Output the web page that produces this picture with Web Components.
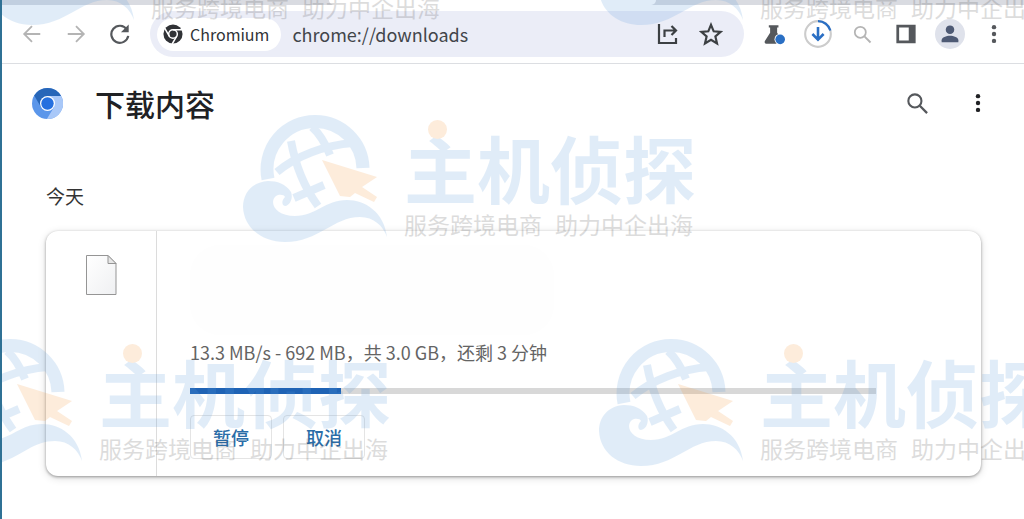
<!DOCTYPE html>
<html lang="zh-CN">
<head>
<meta charset="utf-8">
<title>下载内容</title>
<style>
    html, body { margin: 0; min-height: 100%; }
    body {
        background: #fff;
        color: #202124;
        font-family: "Noto Sans CJK SC", sans-serif;
    }
</style>
</head>
<body>
<downloads-window></downloads-window>

<script>
// 图标统一放在这里，按名称取用
const ICONS = {
    back: '<path d="M21 12H4M12 3.500 3.500 12l8.500 8.500" fill="none" stroke="currentColor" stroke-width="2"/>',
    forward: '<path d="M3 12h17M12 3.500 20.500 12 12 20.500" fill="none" stroke="currentColor" stroke-width="2"/>',
    reload: '<path d="M19.500 7A9.300 9.300 0 1 0 21 14" fill="none" stroke="currentColor" stroke-width="2.400"/><path d="M21.500 1.500V10H13z" fill="currentColor"/>',
    share: '<path d="M4 2v19h17v-5M9.500 15V8.500h11M16.500 4l4.500 4.500-4.500 4.500" fill="none" stroke="currentColor" stroke-width="2.200"/>',
    star: '<path d="M12 2.800l2.700 6.500 7 .6-5.300 4.600 1.600 6.900-6-3.700-6 3.700 1.600-6.900L2.300 9.900l7-.6z" fill="none" stroke="currentColor" stroke-width="2.200"/>',
    flask: '<path d="M5.500 1.500h11v2.400H15v6l6 9.600c.8 1.400 0 3-1.600 3H2.600C1 22.500.2 20.900 1 19.500l6-9.600v-6H5.500z" fill="currentColor"/><circle cx="18.500" cy="17.500" r="6.500" fill="#fff"/><circle cx="18.500" cy="17.500" r="5.500" fill="#2a6fc4"/>',
    download: '<circle cx="12" cy="12" r="11" fill="none" stroke="#ccc" stroke-width="1.800"/><path d="M12 1a11 11 0 0 1 10.600 8" fill="none" stroke="#2a6fc4" stroke-width="1.900"/><path d="M12 6v10.500M7.200 12l4.800 4.800 4.800-4.800" fill="none" stroke="#2a6fc4" stroke-width="2.200"/>',
    search: '<circle cx="9.500" cy="9.500" r="6.300" fill="none" stroke="currentColor" stroke-width="2"/><path d="M14.200 14.200l7 7" stroke="currentColor" stroke-width="2.200"/>',
    panel: '<path d="M1.500 2h21v20h-21zM4.500 5v14h10.500V5z" fill="currentColor" fill-rule="evenodd"/>',
    person: '<circle cx="12" cy="12" r="12" fill="#dfe2eb"/><circle cx="12" cy="8.500" r="3.400" fill="currentColor"/><path d="M5.300 18.600V17c0-2.500 3.800-3.700 6.700-3.700s6.700 1.200 6.700 3.700v1.600z" fill="currentColor"/>',
    dots: '<circle cx="12" cy="4.500" r="2.400" fill="currentColor"/><circle cx="12" cy="12" r="2.400" fill="currentColor"/><circle cx="12" cy="19.500" r="2.400" fill="currentColor"/>',
    chromeMono: '<circle cx="12" cy="12" r="11.500" fill="currentColor"/><g fill="none" stroke="#fff" stroke-width="1.800"><circle cx="12" cy="12" r="5.200"/><path d="M12 6.800h11M7.500 14.600 2 5M16.500 14.600 11 24"/></g>',
    chromium: '<circle cx="12" cy="12" r="12" fill="#5b96ea"/><path d="M12 6.200h10.500A12 12 0 0 1 11.500 24L17 14.900z" fill="#a9c8f8"/><path d="M1.700 5.900A12 12 0 0 1 22.500 6.200H12L7 14.900z" fill="#2766b8"/><circle cx="12" cy="12" r="5.800" fill="#fff"/><circle cx="12" cy="12" r="4.800" fill="#2570df"/>'
};

/**
 * <ui-icon> 图标
 *   data-name - 图标名称
 *   data-size - 边长 (默认 20)
 */
class UiIcon extends HTMLElement {
    constructor() {
        super();
        this.attachShadow({ mode: 'open' });
    }

    connectedCallback() {
        const size = this.dataset.size || 20;
        this.shadowRoot.innerHTML = `
            <style>
                :host { display: inline-flex; flex: none; }
            </style>
            <svg width="${size}" height="${size}" viewBox="0 0 24 24" aria-hidden="true">${ICONS[this.dataset.name]}</svg>
        `;
    }
}

/**
 * <icon-button> 图标按钮
 *   data-icon / data-size / data-label
 */
class IconButton extends HTMLElement {
    constructor() {
        super();
        this.attachShadow({ mode: 'open' });
    }

    connectedCallback() {
        const { icon, size, label } = this.dataset;
        this.shadowRoot.innerHTML = `
            <style>
                :host { display: block; flex: none; width: 44px; color: #55585c; }
                button {
                    display: flex;
                    align-items: center;
                    justify-content: center;
                    width: 100%;
                    height: 44px;
                    padding: 0;
                    border: 0;
                    background: none;
                    color: inherit;
                    cursor: pointer;
                }
            </style>
            <button type="button" aria-label="${label}"><ui-icon data-name="${icon}" data-size="${size || 20}"></ui-icon></button>
        `;
    }
}

// 地址栏
class OmniBox extends HTMLElement {
    constructor() {
        super();
        this.attachShadow({ mode: 'open' });
    }

    connectedCallback() {
        this.shadowRoot.innerHTML = `
            <style>
                :host {
                    display: flex;
                    align-items: center;
                    flex: 1;
                    min-width: 0;
                    height: 46px;
                    padding: 0 11px 0 7px;
                    box-sizing: border-box;
                    border-radius: 23px;
                    background: #ebedf7;
                }
                .chip {
                    display: flex;
                    align-items: center;
                    gap: 7px;
                    height: 33px;
                    padding: 0 12px 0 6px;
                    border: 0;
                    border-radius: 17px;
                    background: #fff;
                    color: #303236;
                    font: 16px "Noto Sans CJK SC", sans-serif;
                }
                input {
                    flex: 1;
                    min-width: 0;
                    margin-left: 11px;
                    padding: 0;
                    border: 0;
                    outline: 0;
                    background: none;
                    color: #42454a;
                    font: 18px "Noto Sans CJK SC", sans-serif;
                }
                icon-button { color: #3c4043; }
            </style>
            <button class="chip" type="button"><ui-icon data-name="chromeMono"></ui-icon>Chromium</button>
            <input type="text" aria-label="地址" value="${this.dataset.url}">
            <slot></slot>
        `;
    }
}

// 浏览器顶部：标签条 + 工具栏
class BrowserBar extends HTMLElement {
    constructor() {
        super();
        this.attachShadow({ mode: 'open' });
    }

    connectedCallback() {
        this.shadowRoot.innerHTML = `
            <style>
                :host { display: block; border-bottom: 1px solid #dcdee2; }
                .strip { display: flex; height: 5px; background: #d9dbe1; }
                .strip .before { flex: 32; }
                .strip .tab { flex: 32; background: #fff; border-radius: 0 0 5px 5px; }
                .strip .after { flex: 36; }
                nav { display: flex; align-items: center; height: 58px; padding: 0 8px; }
                omni-box { margin: 0 8px; }
                .dim { color: #b4b4b4; }
                .dark { color: #3c4043; }
                .person { color: #4e5a74; }
            </style>
            <div class="strip"><div class="before"></div><div class="tab"></div><div class="after"></div></div>
            <nav>
                <icon-button class="dim" data-icon="back" data-label="后退" data-size="22"></icon-button>
                <icon-button class="dim" data-icon="forward" data-label="前进" data-size="22"></icon-button>
                <icon-button data-icon="reload" data-label="重新加载" data-size="22"></icon-button>
                <omni-box data-url="chrome://downloads">
                    <icon-button class="dark" data-icon="share" data-label="分享" data-size="24"></icon-button>
                    <icon-button class="dark" data-icon="star" data-label="收藏" data-size="24"></icon-button>
                </omni-box>
                <icon-button data-icon="flask" data-label="实验" data-size="21"></icon-button>
                <icon-button data-icon="download" data-label="下载" data-size="28"></icon-button>
                <icon-button class="dim" data-icon="search" data-label="搜索" data-size="21"></icon-button>
                <icon-button data-icon="panel" data-label="侧边栏" data-size="22"></icon-button>
                <icon-button class="person" data-icon="person" data-label="个人资料" data-size="30"></icon-button>
                <icon-button data-icon="dots" data-label="菜单" data-size="22"></icon-button>
            </nav>
        `;
    }
}

// 页面标题栏
class PageHeader extends HTMLElement {
    constructor() {
        super();
        this.attachShadow({ mode: 'open' });
        this.shadowRoot.innerHTML = `
            <style>
                :host { display: flex; align-items: center; height: 78px; padding: 0 24px 0 30px; }
                h1 {
                    flex: 1;
                    margin: 0 0 0 32px;
                    font: 500 30px/44px "Noto Sans CJK SC", sans-serif;
                    color: #202124;
                }
                .tools { display: flex; gap: 17px; }
                .menu { color: #202124; }
            </style>
            <ui-icon data-name="chromium" data-size="31"></ui-icon>
            <h1><slot></slot></h1>
            <div class="tools">
                <icon-button data-icon="search" data-label="搜索下载内容" data-size="25"></icon-button>
                <icon-button class="menu" data-icon="dots" data-label="更多操作" data-size="22"></icon-button>
            </div>
        `;
    }
}

/**
 * <download-item> 下载项卡片
 *   data-progress - 完成百分比
 */
class DownloadItem extends HTMLElement {
    constructor() {
        super();
        this.attachShadow({ mode: 'open' });
    }

    connectedCallback() {
        this.shadowRoot.innerHTML = `
            <style>
                :host {
                    display: flex;
                    border-radius: 12px;
                    background: #fff;
                    box-shadow: 0 1px 3px rgba(0, 0, 0, .36), 0 2px 8px rgba(0, 0, 0, .14);
                }
                .file {
                    flex: none;
                    width: 110px;
                    padding-top: 24px;
                    text-align: center;
                    border-right: 1px solid #dcdcdc;
                }
                .body { flex: 1; min-width: 0; padding: 14px 105px 17px 33px; }
                .name {
                    height: 90px;
                    max-width: 364px;
                    border-radius: 30px;
                    background: #fefefe;
                }
                label {
                    display: block;
                    margin-top: 5px;
                    color: #646464;
                    font: 18px/24px "Noto Sans CJK SC", sans-serif;
                }
                progress {
                    display: block;
                    width: 100%;
                    height: 6px;
                    margin-top: 24px;
                    appearance: none;
                    border: 0;
                    background: #d8d8d8;
                }
                progress::-webkit-progress-bar { background: #d8d8d8; }
                progress::-webkit-progress-value { background: #1f63b5; }
                .actions { display: flex; gap: 11px; margin-top: 21px; }
                button {
                    min-width: 82px;
                    height: 44px;
                    padding: 0 20px;
                    border: 1px solid #e4e4e4;
                    border-radius: 4px;
                    background: none;
                    color: #2a6da8;
                    font: 500 18px "Noto Sans CJK SC", sans-serif;
                }
            </style>
            <div class="file">
                <svg width="31" height="40" viewBox="0 0 31 40" aria-hidden="true">
                    <defs><linearGradient id="paper" x2="1" y2="1"><stop stop-color="#fff"/><stop offset="1" stop-color="#eff0f2"/></linearGradient></defs>
                    <path d="M.5.500H22l8 8v31H.5z" fill="url(#paper)" stroke="#959595"/>
                    <path d="M22 .5v8h8z" fill="#e6e6e6" stroke="#959595"/>
                </svg>
            </div>
            <div class="body">
                <div class="name"></div>
                <label for="bar"><slot></slot></label>
                <progress id="bar" max="100" value="${this.dataset.progress}"></progress>
                <div class="actions">
                    <button type="button">暂停</button>
                    <button type="button">取消</button>
                </div>
            </div>
        `;
    }
}

// 水印：地球 + 海浪 + 箭头标志，右侧文字
class BrandMark extends HTMLElement {
    constructor() {
        super();
        this.attachShadow({ mode: 'open' });
        this.shadowRoot.innerHTML = `
            <style>
                :host { display: flex; gap: 16px; width: max-content; opacity: .18; color: #5a9bdc; }
                svg { flex: none; }
                .text { position: relative; padding-top: 15px; white-space: nowrap; }
                .text::before {
                    content: "";
                    position: absolute;
                    left: 24px;
                    top: 5px;
                    width: 19px;
                    height: 19px;
                    border-radius: 50%;
                    background: #f5983c;
                }
                .word { font: 700 73px/72px "Noto Sans CJK SC", sans-serif; }
                .line { display: flex; gap: 13px; margin-top: 10px; color: #444; font: 400 23px/24px "Noto Sans CJK SC", sans-serif; }
            </style>
            <svg width="145" height="128" viewBox="0 0 145 128" aria-hidden="true">
                <g fill="none" stroke="currentColor">
                    <path d="M25 64A48 48 0 0 1 72.500 6.500 48 48 0 0 1 120 53" stroke-width="13"/>
                    <path d="M48 26C52 48 61 72 75 91M69 12c9 8 14 18 18 28M34 57C53 41 82 30 110 28M51 83l30-13" stroke-width="8"/>
                </g>
                <path d="M79 45l55 17-15 10 15 10-3 5-19-9-5 4-10-1z" fill="#f5983c"/>
                <path d="M144 122C141 97 122 85 104 85 82 85 73 101 52 101 38 101 30 94 30 87 31 78 41 79 42 82 38 86 39 91 42 91 48 90 50 82 48 77 43 69 34 66 25 66 9 67 0 78 0 92c1 21 19 35 42 35 34 0 48-25 75-25 14 0 23 9 27 20z" fill="currentColor"/>
            </svg>
            <div class="text">
                <div class="word">主机侦探</div>
                <div class="line"><span>服务跨境电商</span> <span>助力中企出海</span></div>
            </div>
        `;
    }
}

class DownloadsWindow extends HTMLElement {
    constructor() {
        super();
        this.attachShadow({ mode: 'open' });
        this.shadowRoot.innerHTML = `
            <style>
                :host {
                    display: block;
                    position: relative;
                    min-height: 100vh;
                    box-sizing: border-box;
                    border-left: 2px solid #2f7195;
                    overflow: hidden;
                }
                main { padding: 40px 43px 43px 44px; }
                h2 { margin: 0 0 21px; font: 19px/28px "Noto Sans CJK SC", sans-serif; color: #333; }
                /* 水印浮在内容之上，不响应鼠标 */
                .marks { position: absolute; inset: 0; overflow: hidden; pointer-events: none; }
                brand-mark { position: absolute; }
            </style>
            <browser-bar></browser-bar>
            <page-header>下载内容</page-header>
            <main>
                <h2>今天</h2>
                <download-item data-progress="22">13.3 MB/s - 692 MB，共 3.0 GB，还剩 3 分钟</download-item>
            </main>
            <div class="marks">
                <brand-mark style="left: -12px; top: -102px"></brand-mark>
                <brand-mark style="left: 597px; top: -102px"></brand-mark>
                <brand-mark style="left: 241px; top: 115px"></brand-mark>
                <brand-mark style="left: -64px; top: 339px"></brand-mark>
                <brand-mark style="left: 597px; top: 339px"></brand-mark>
            </div>
        `;
    }
}

customElements.define('ui-icon', UiIcon);
customElements.define('icon-button', IconButton);
customElements.define('omni-box', OmniBox);
customElements.define('browser-bar', BrowserBar);
customElements.define('page-header', PageHeader);
customElements.define('download-item', DownloadItem);
customElements.define('brand-mark', BrandMark);
customElements.define('downloads-window', DownloadsWindow);
</script>
</body>
</html>
